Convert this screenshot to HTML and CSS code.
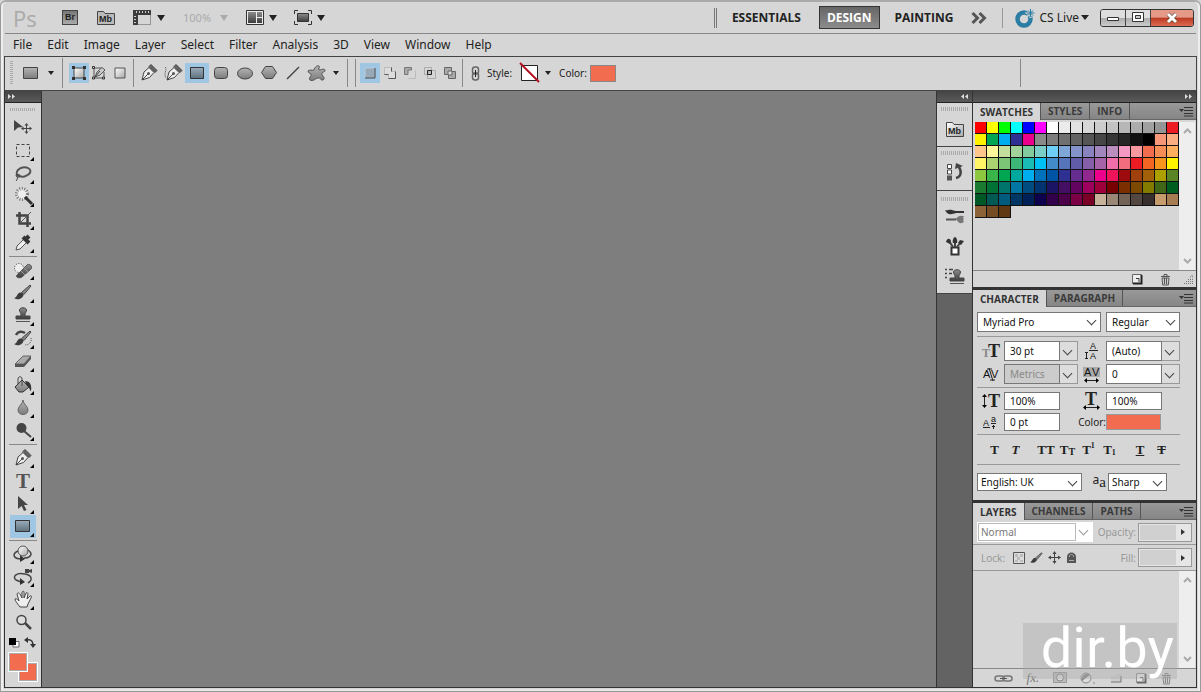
FILE: index.html
```html
<!DOCTYPE html>
<html lang="en">
<head>
<meta charset="utf-8">
<title>Photoshop workspace</title>
<link rel="stylesheet" href="styles.css">
</head>
<body>
<svg class="defs" aria-hidden="true">
  <defs>
    <linearGradient id="gm" x1="0" y1="0" x2="0" y2="1"><stop offset="0" stop-color="#b4b4b4"/><stop offset="1" stop-color="#7c7c7c"/></linearGradient>
    <linearGradient id="gd" x1="0" y1="0" x2="0" y2="1"><stop offset="0" stop-color="#8c8c8c"/><stop offset="1" stop-color="#3c3c3c"/></linearGradient>
    <linearGradient id="gl" x1="0" y1="0" x2="1" y2="1"><stop offset="0" stop-color="#ffffff"/><stop offset="1" stop-color="#a8a8a8"/></linearGradient>
    <linearGradient id="gb" x1="0" y1="0" x2="0" y2="1"><stop offset="0" stop-color="#9aacb9"/><stop offset="1" stop-color="#60717e"/></linearGradient>
    <g id="pen"><path d="M2 16 4 8 9 3.500 14 8.500 9.500 13.500Z" fill="#eeeeee" stroke="#444"/><path d="M2 16 8 10" stroke="#444"/><circle cx="8.500" cy="9.500" r="1.500" fill="#555"/><path d="M9 2.500 11 .5 17 6.500 15 8.500Z" fill="#666" stroke="#444"/></g>
    <g id="menu"><path d="M0 4h5L2.500 7Z" fill="#333"/><path d="M5 2.500h9M5 5.500h9M5 8.500h9M5 11h9" stroke="#333"/></g>
    <g id="brush"><path d="M0 14c3 0 3-5 6-5.500 3.500 0 4.500 3 2 5C6 15.500 3 16 0 14Z" fill="#3c3c3c"/><path d="M7.500 8.500 16 1l1 1-7 8.500Z" fill="#888" stroke="#444"/></g>
    <g id="stamp"><path d="M6 9V7c0-1-1.500-2-1.500-4 0-3 7-3 7 0C11.500 5 10 6 10 7v2h5v3H1V9Z" fill="url(#gd)" stroke="#444"/><path d="M1 14.500h14" stroke="#555"/></g>
    <g id="trash"><path d="M1 3.500h9M4 3V1.500h3V3" fill="none" stroke="#555"/><path d="M2 5h7l-.7 7H2.700Z" fill="#ccc" stroke="#555"/><path d="M4.500 5v6M6.500 5v6" stroke="#555"/></g>
    <g id="page"><path d="M.5.500h9v9h-9Z" fill="#eee" stroke="#666"/><path d="M9.500 1v8.500H1" fill="none" stroke="#222" stroke-width="2"/><path d="M4 4.500h3V8" fill="none" stroke="#333"/></g>
    <g id="up"><path d="M1 5 4.500 1.500 8 5" fill="none" stroke="#aaa" stroke-width="2"/></g>
    <g id="down"><path d="M1 1 4.500 4.500 8 1" fill="none" stroke="#aaa" stroke-width="2"/></g>
  </defs>
</svg>
<div class="window">
  <header class="titlebar">
    <span class="logo">Ps</span>
    <button class="icon-btn bridge" aria-label="Bridge"><span class="br">Br</span></button>
    <button class="icon-btn minib" aria-label="Mini Bridge"><svg width="20" height="16"><path d="M1.500 14.500v-13h6l1.500 2h9.500v11Z" fill="#bbb" stroke="#444"/><text x="3" y="12" class="mbtxt">Mb</text></svg></button>
    <button class="icon-btn drop extras" aria-label="View extras"><svg width="19" height="16"><path d="M0 0h18v5H5v10H0Z" fill="#3c3c3c"/><path d="M3.500 1v2M6.500 1v2M9.500 1v2M12.500 1v2M15.500 1v2M1 6.500h2M1 9.500h2M1 12.500h2" stroke="#ccc"/><path d="M5.500 14.500h12V5" fill="none" stroke="#555" stroke-dasharray="1 1"/></svg><i class="tri"></i></button>
    <button class="icon-btn drop zoomlvl">100%<i class="tri"></i></button>
    <button class="icon-btn drop arrange" aria-label="Arrange documents"><svg width="18" height="16"><path d="M.5.500h17v14H.5Z" fill="#eee" stroke="#333"/><path d="M2 2h8v11H2ZM11 2h5v5h-5ZM11 8h5v5h-5Z" fill="url(#gd)"/></svg><i class="tri"></i></button>
    <button class="icon-btn drop" aria-label="Screen mode"><svg width="18" height="15"><path d="M.5 4V.5H4M14 .5h3.500V4M17.500 11v3.500H14M4 14.500H.5V11" fill="none" stroke="#333"/><path d="M3.500 3.500h11v8h-11Z" fill="url(#gd)" stroke="#333"/></svg><i class="tri"></i></button>
    <div class="spaces">
      <button class="space">ESSENTIALS</button>
      <button class="space on">DESIGN</button>
      <button class="space">PAINTING</button>
      <button class="more" aria-label="More workspaces"><svg width="16" height="12"><path d="M1.500 1 6.500 6 1.500 11M8.500 1 13.500 6 8.500 11" fill="none" stroke="#555" stroke-width="3"/></svg></button>
    </div>
    <button class="cslive"><svg width="20" height="20"><circle cx="9" cy="11" r="6.500" fill="none" stroke="#2b7da3" stroke-width="4.500"/><path d="M15.500 0v10M10.500 5h10M12 1.500l7 7M19 1.500l-7 7" stroke="#d6d6d6" stroke-width="2"/><path d="M15.500 1v8M11.500 5h8M13 2.500l5 5M18 2.500l-5 5" stroke="#2b7da3"/></svg><span>CS Live</span><i class="tri small"></i></button>
    <div class="winbtns">
      <button aria-label="Minimize"><svg width="14" height="8"><path d="M1.500 3.500h11v3h-11Z" fill="#fff" stroke="#333"/></svg></button>
      <button aria-label="Maximize"><svg width="14" height="11"><path d="M1.500.500h11v9h-11Z" fill="#fff" stroke="#333"/><path d="M4.500 3.500h5v3h-5Z" fill="#ccc" stroke="#333"/></svg></button>
      <button class="close" aria-label="Close"><svg width="14" height="12"><path d="M3 2 11 10M11 2 3 10" stroke="#543" stroke-width="4"/><path d="M3 2 11 10M11 2 3 10" stroke="#fff" stroke-width="3"/></svg></button>
    </div>
  </header>
  <nav class="menubar">
    <button>File</button><button>Edit</button><button>Image</button><button>Layer</button><button>Select</button><button>Filter</button><button>Analysis</button><button>3D</button><button>View</button><button>Window</button><button>Help</button>
  </nav>

  <div class="options">
    <i class="vgrip"></i>
    <button class="opt preset" aria-label="Tool preset"><svg width="16" height="13"><path d="M.5.500h14v11H.5Z" fill="url(#gm)" stroke="#444"/></svg><i class="tri small"></i></button>
    <div class="group">
      <button class="opt on" aria-label="Shape layers"><svg width="16" height="16"><path d="M3 3h10v10H3Z" fill="url(#gl)" stroke="#444"/><path d="M1 1h3v3H1ZM12 1h3v3h-3ZM1 12h3v3H1ZM12 12h3v3h-3Z" fill="#333"/></svg></button>
      <button class="opt" aria-label="Paths"><svg width="16" height="16"><path d="M3 3h8M3 3v10h10V7" fill="none" stroke="#555"/><path d="M1.500 1.500h2v2h-2ZM1.500 12h2v2h-2ZM11.500 12h2v2h-2Z" fill="#ddd" stroke="#333"/><path d="M4 12 6 7 11 2.500 14 5 9 10Z" fill="#ccc" stroke="#555"/><path d="M4 12 9 6" stroke="#444"/></svg></button>
      <button class="opt" aria-label="Fill pixels"><svg width="12" height="12"><path d="M1 1h10v10H1Z" fill="url(#gl)" stroke="#555"/></svg></button>
    </div>
    <div class="group shapes">
      <button class="opt" aria-label="Pen"><svg width="18" height="18"><use href="#pen"/></svg></button>
      <button class="opt" aria-label="Freeform pen"><svg width="20" height="18"><use href="#pen" x="2"/><path d="M2 3c3 2-2 6 1 11" fill="none" stroke="#444" stroke-dasharray="1 1"/></svg></button>
      <button class="opt on" aria-label="Rectangle"><svg width="15" height="13"><path d="M.5.500h13v11H.5Z" fill="url(#gb)" stroke="#333"/></svg></button>
      <button class="opt" aria-label="Rounded rectangle"><svg width="15" height="13"><rect x=".5" y=".5" width="13" height="11" rx="3" fill="url(#gm)" stroke="#444"/></svg></button>
      <button class="opt" aria-label="Ellipse"><svg width="17" height="13"><ellipse cx="8" cy="6.500" rx="7.500" ry="5.500" fill="url(#gm)" stroke="#444"/></svg></button>
      <button class="opt" aria-label="Polygon"><svg width="17" height="14"><path d="M4.500.500h7l4 6-4 6h-7l-4-6Z" fill="url(#gm)" stroke="#444"/></svg></button>
      <button class="opt" aria-label="Line"><svg width="14" height="14"><path d="M1 13 13 1" stroke="#444" stroke-width="1.500"/></svg></button>
      <button class="opt" aria-label="Custom shape"><svg width="20" height="17"><path d="M7 5c1-3 3-5 5-4 1 1-1 3 0 4 2 0 5-2 6 0 1 2-4 2-3 4 0 2 4 4 1 6-2 1-3-3-5-2-2 0-5 4-8 2-2-2 2-4 1-6-1-1-3-1-3-3 1-2 4 0 6-1Z" fill="url(#gm)" stroke="#555"/></svg></button>
      <button class="tiny" aria-label="Shape options"><i class="tri small"></i></button>
    </div>
    <div class="group combine">
      <button class="opt on" aria-label="Create new shape layer"><svg width="12" height="12"><path d="M1 1h10v10H1Z" fill="#98aab8" stroke="#bcd"/><path d="M1 11h10V1" fill="none" stroke="#444"/></svg></button>
      <button class="opt" aria-label="Add"><svg width="14" height="14"><path d="M1.500 1.500h7v4h4v7h-7v-4h-4Z" fill="#ddd" stroke="#bbb"/><path d="M1.500 8.500h4M8.500 1.500v4M5.500 12.500h7v-7" fill="none" stroke="#555"/></svg></button>
      <button class="opt" aria-label="Subtract"><svg width="14" height="14"><path d="M1.500 8.500v-7h7V4H5v4.500Z" fill="#aaa" stroke="#777"/><path d="M5.500 12.500h7v-8" fill="none" stroke="#bbb"/></svg></button>
      <button class="opt" aria-label="Intersect"><svg width="14" height="14"><path d="M1.500 1.500h7v7h-7ZM4.500 4.500h8v8h-8Z" fill="none" stroke="#aaa"/><path d="M4.500 4.500h4v4h-4Z" fill="#bbb" stroke="#222"/></svg></button>
      <button class="opt" aria-label="Exclude"><svg width="14" height="14"><path d="M1.500 1.500h7v7h-7ZM5.500 5.500h7v7h-7Z" fill="#aaa" stroke="#666"/><path d="M5 5h4v4H5Z" fill="#ddd" stroke="#666"/></svg></button>
    </div>
    <button class="opt link" aria-label="Link"><svg width="9" height="15"><rect x="1.500" y="1" width="6" height="7" rx="2.500" fill="none" stroke="#666" stroke-width="1.500"/><rect x="1.500" y="7" width="6" height="7" rx="2.500" fill="none" stroke="#666" stroke-width="1.500"/><path d="M4.500 4v7" stroke="#222"/></svg></button>
    <span class="lbl">Style:</span>
    <button class="style-chip" aria-label="Style"><svg width="22" height="22"><path d="M2.500 3.500h16v15h-16Z" fill="#fff" stroke="#222"/><path d="M1 1 20 20" stroke="#b01020" stroke-width="2"/></svg><i class="tri small"></i></button>
    <span class="lbl">Color:</span>
    <button class="color-chip" aria-label="Color"></button>
    <i class="opt-end"></i>
  </div>

  <main class="work">
    <aside class="tools">
      <div class="colhead left"><svg width="8" height="7"><path d="M0 1 3 3.500 0 6ZM4 1 7 3.500 4 6Z" fill="#ddd"/></svg></div>
      <i class="hgrip"></i>
      <div class="toolset">
        <button aria-label="Move"><svg width="20" height="17"><path d="M1 1 10 8 5 8.500 1 12Z" fill="#444"/><path d="M13.500 5v9M9 9.500h9" stroke="#444"/><path d="M11.500 6.500h4l-2-2.500ZM11.500 12.500h4l-2 2.500ZM10.500 7.500v4L8 9.500ZM16.500 7.500v4l2.500-2Z" fill="#444"/></svg></button>
        <button class="fly" aria-label="Marquee"><svg width="16" height="15"><rect x="1.500" y="1.500" width="13" height="12" fill="none" stroke="#444" stroke-dasharray="3 2"/></svg></button>
        <button class="fly" aria-label="Lasso"><svg width="18" height="16"><ellipse cx="9.500" cy="6" rx="7" ry="4.500" transform="rotate(-12 9.500 6)" fill="none" stroke="#555" stroke-width="2"/><path d="M3 8c-3 2 2 5 3 2 1-2-4-2-3 0 1 2 0 4-1 5" fill="none" stroke="#444"/></svg></button>
        <button class="fly" aria-label="Magic wand"><svg width="19" height="19"><circle cx="8" cy="7" r="5.500" fill="#eee" stroke="#777" stroke-width="3" stroke-dasharray="1 1.500"/><path d="M11 10 18 17" stroke="#333" stroke-width="3"/></svg></button>
        <button class="fly" aria-label="Crop"><svg width="17" height="17"><path d="M4.500 1v11.500H16M1 4.500h11.500V16" fill="none" stroke="#444" stroke-width="2.500"/><path d="M5 12 16 1" stroke="#555"/></svg></button>
        <button class="fly" aria-label="Eyedropper"><svg width="17" height="17"><path d="M1 16 2 12 9 5l3 3-7 7Z" fill="#eee" stroke="#555"/><path d="M8 3 14 9M11 5l3-3" stroke="#333" stroke-width="4"/></svg></button>
      </div>
      <div class="toolset">
        <button class="fly" aria-label="Healing brush"><svg width="20" height="18"><circle cx="6" cy="7" r="4.500" fill="#eee" stroke="#333" stroke-dasharray="1 1.500"/><path d="M4 14 14 4c2-2 6 1 4 4L9 16c-3 2-7 0-5-2Z" fill="url(#gd)" stroke="#555"/><path d="M8 10l4 4M11 7l4 4" stroke="#999"/></svg></button>
        <button class="fly" aria-label="Brush"><svg width="18" height="17"><use href="#brush"/></svg></button>
        <button class="fly" aria-label="Clone stamp"><svg width="17" height="17"><use href="#stamp"/></svg></button>
        <button class="fly" aria-label="History brush"><svg width="19" height="17"><use href="#brush"/><path d="M2 5c2-4 6-4 9-2" fill="none" stroke="#444" stroke-width="2.500"/><path d="M17 8c1 4-2 7-6 7" fill="none" stroke="#555" stroke-dasharray="1 1"/></svg></button>
        <button class="fly" aria-label="Eraser"><svg width="20" height="15"><path d="M2 10 10 2h8l-7 8Z" fill="#aaa" stroke="#666"/><path d="M2 10h9l7-8v3l-7 8H2Z" fill="#555"/></svg></button>
        <button class="fly" aria-label="Paint bucket"><svg width="20" height="18"><path d="M2 11 9 4l7 7-6 5H6Z" fill="url(#gm)" stroke="#333"/><path d="M5 8V3c0-3 4-3 4 0v7" fill="none" stroke="#444"/><path d="M12 5c5 0 7 4 6 10-2-1-1-4-4-5Z" fill="#333"/></svg></button>
        <button class="fly" aria-label="Blur"><svg width="14" height="17"><path d="M7 1c0 4-5 6-5 10 0 6 10 6 10 0C12 7 7 5 7 1Z" fill="url(#gm)" stroke="#666"/></svg></button>
        <button class="fly" aria-label="Dodge"><svg width="17" height="17"><circle cx="6.500" cy="6" r="5" fill="#444"/><path d="M9 9 16 15" stroke="#444" stroke-width="2"/></svg></button>
      </div>
      <div class="toolset">
        <button class="fly" aria-label="Pen tool"><svg width="18" height="18"><use href="#pen"/></svg></button>
        <button class="fly type" aria-label="Type">T</button>
        <button class="fly" aria-label="Path selection"><svg width="12" height="17"><path d="M1 1v13l3.500-3L7 16l2.500-1L7 10h4Z" fill="#444"/></svg></button>
        <button class="fly on" aria-label="Rectangle tool"><svg width="16" height="13"><path d="M.5.500h14v11H.5Z" fill="url(#gb)" stroke="#333"/></svg></button>
      </div>
      <div class="toolset last">
        <button class="fly" aria-label="3D rotate"><svg width="20" height="18"><circle cx="10" cy="6" r="5" fill="url(#gl)" stroke="#555"/><path d="M5 6c-7 3-4 8 3 8M15 5c6 4 2 8-4 8" fill="none" stroke="#444" stroke-width="1.500"/><path d="M7 10v7l5-3Z" fill="#333"/></svg></button>
        <button class="fly" aria-label="3D camera"><svg width="20" height="18"><path d="M12 1h4v1l3-1v4l-3-1v1h-4Z" fill="#444"/><path d="M12 6C3 4-1 9 3 12l5 2M12 6c7 1 8 6 3 9" fill="none" stroke="#444" stroke-width="1.500"/><path d="M7 10v7l5-3Z" fill="#333"/></svg></button>
        <button class="fly" aria-label="Hand"><svg width="19" height="19"><path d="M6 17C3 13 1 11 1 9c1-1 2 0 4 2L3 4c1-2 2-1 3 0l2 4V2c1-1 2-1 2 0v6l2-5c1-1 2 0 2 1l-1 5 3-3c1-1 2 0 1 2l-3 6-1 3Z" fill="#eee" stroke="#444"/></svg></button>
        <button aria-label="Zoom"><svg width="17" height="17"><circle cx="6.500" cy="6" r="4.500" fill="#ddd" stroke="#444" stroke-width="1.500"/><path d="M10 9 16 15" stroke="#444" stroke-width="2.500"/></svg></button>
      </div>
      <div class="minis"><svg width="11" height="10"><path d="M4 3.500h6V9H4Z" fill="#fff" stroke="#666"/><path d="M0 0h7v7H0Z" fill="#000"/></svg><svg width="12" height="11"><path d="M3 3c5-1 6 2 6 6" fill="none" stroke="#333" stroke-width="1.500"/><path d="M4 0v6L0 3ZM6 7h6l-3 4Z" fill="#333"/></svg></div>
      <div class="fgbg"><button class="bg" aria-label="Background color"></button><button class="fg" aria-label="Foreground color"></button></div>
    </aside>

    <section class="canvas" aria-label="Canvas"></section>

    <aside class="dock">
      <div class="colhead right"><svg width="8" height="7"><path d="M3 1 0 3.500 3 6ZM7 1 4 3.500 7 6Z" fill="#ddd"/></svg></div>
      <div class="dockgroup"><i class="hgrip"></i><button aria-label="Mini Bridge panel"><svg width="20" height="18"><path d="M1.500 16.500v-14h6l1.500 2h9.500v12Z" fill="url(#gl)" stroke="#444"/><text x="3" y="14" class="mbtxt">Mb</text></svg></button></div>
      <div class="dockgroup"><i class="hgrip"></i><button aria-label="History"><svg width="18" height="18"><path d="M1.500 1.500h4v4h-4ZM1.500 7h4v4h-4Z" fill="#fff" stroke="#444"/><path d="M1 12.500h5v5H1Z" fill="#555"/><path d="M10 15c5-1 6-6 3-11" fill="none" stroke="#444" stroke-width="2.500"/><path d="M9 6 10 0l7 3Z" fill="#444"/></svg></button></div>
      <div class="dockgroup"><i class="hgrip"></i>
        <button aria-label="Brush panel"><svg width="20" height="17"><path d="M0 2c2 1 4-1 7 0 1 0 2 1 4 1h8v2h-8c-1 0-2 1-4 1-3 1-5 0-7-4Z" fill="#333"/><path d="M1 11.500h10" stroke="#555" stroke-width="2"/><path d="M10 11c3-1 3-4 7-3l2 0-1 2 1 1-1 1 1 2-2 1c-4 1-4-3-7-4Z" fill="#777"/></svg></button>
        <button aria-label="Brush presets"><svg width="18" height="19"><path d="M5.500 10.500h7v7h-7Z" fill="#fff" stroke="#333" stroke-width="2"/><path d="M7 10 3 4M9 10V3M11 10l4-5" stroke="#444" stroke-width="2"/><path d="M0 5c1-4 4-4 5-1L4 7ZM7 6c-1-3 1-6 2-6s3 3 2 6ZM12 6l2-3 4 1-3 4Z" fill="#333"/></svg></button>
        <button aria-label="Clone source"><svg width="20" height="18"><path d="M0 2.500h2M4 2.500h4M0 6.500h2M4 6.500h3M0 10.500h2" stroke="#444" stroke-width="1.500"/><g transform="translate(4 2)"><use href="#stamp"/></g></svg></button>
      </div>
    </aside>

    <aside class="panels">
      <div class="colhead end"><svg width="8" height="7"><path d="M0 1 3 3.500 0 6ZM4 1 7 3.500 4 6Z" fill="#ddd"/></svg></div>
      <section class="panel">
        <div class="tabs"><button class="on">SWATCHES</button><button>STYLES</button><button>INFO</button><svg class="pmenu" width="14" height="12"><use href="#menu"/></svg></div>
        <div class="swbody"><div class="swatches" id="swatches"></div><div class="scroll"><svg width="9" height="6"><use href="#up"/></svg><svg width="9" height="6"><use href="#down"/></svg></div></div>
        <div class="swfoot"><svg width="11" height="11"><use href="#page"/></svg><svg width="11" height="13"><use href="#trash"/></svg><svg width="11" height="11"><path d="M9 1v1M7 3h3M5 5.500h6M3 7.500h8M1 9.500h10" stroke="#777" stroke-dasharray="1 1" /></svg></div>
      </section>
      <section class="panel">
        <div class="tabs"><button class="on">CHARACTER</button><button>PARAGRAPH</button><svg class="pmenu" width="14" height="12"><use href="#menu"/></svg></div>
        <div class="char">
          <div class="crow fonts"><div class="sel"><select aria-label="Font family"><option>Myriad Pro</option></select></div><div class="sel"><select aria-label="Font style"><option>Regular</option></select></div></div>
          <div class="cgrid">
            <svg width="18" height="16"><text x="0" y="14" class="s12">T</text><text x="6" y="14" class="s17">T</text></svg>
            <div class="combo"><input aria-label="Font size" value="30 pt"><button aria-label="Font size list"></button></div>
            <svg width="16" height="20"><text x="6" y="8" class="a9">A</text><text x="6" y="18" class="a9">A</text><path d="M2.500 11v7M1 11.500h3M1 17.500h3M5 9.500h9" stroke="#222"/></svg>
            <div class="combo"><input aria-label="Leading" value="(Auto)"><button aria-label="Leading list"></button></div>
            <svg width="18" height="17"><text x="1" y="12" class="a10">A</text><text x="9" y="12" class="a10">V</text><path d="M7 2 11 15M5 3h5M8 14h5" stroke="#222"/></svg>
            <div class="combo off"><input aria-label="Kerning" value="Metrics" disabled><button aria-label="Kerning list"></button></div>
            <svg width="18" height="17"><path d="M0 1h17v10H0Z" fill="#aaa"/><text x="1" y="10" class="a10">A</text><text x="9" y="10" class="a10">V</text><path d="M2 14.500h13" stroke="#222"/><path d="M1 14.500 4 12v5ZM16 14.500 13 12v5Z"/></svg>
            <div class="combo"><input aria-label="Tracking" value="0"><button aria-label="Tracking list"></button></div>
          </div>
          <div class="cgrid short">
            <svg width="18" height="18"><path d="M2.500 3v11" stroke="#222"/><path d="M0 5h5L2.500 2ZM0 13h5l-2.500 3Z"/><text x="6" y="15" class="s17">T</text></svg>
            <input aria-label="Vertical scale" value="100%">
            <svg width="18" height="18"><text x="2" y="13" class="s17">T</text><path d="M2 15.500h13" stroke="#222"/><path d="M0 15.500 3 13v5ZM17 15.500 14 13v5Z"/></svg>
            <input aria-label="Horizontal scale" value="100%">
            <svg width="17" height="16"><text x="1" y="12" class="a9">A</text><text x="9" y="8" class="a9">a</text><path d="M1 13.500h7M9 9.500h5M11.500 11v4M10 12.500h3" stroke="#222"/></svg>
            <input aria-label="Baseline shift" value="0 pt">
            <span class="clbl">Color:</span>
            <button class="chip" aria-label="Text color"></button>
          </div>
          <div class="styles"><button aria-label="Bold"><b>T</b></button><button aria-label="Italic"><em>T</em></button><button class="wide" aria-label="All caps">TT</button><button aria-label="Small caps">T<small>T</small></button><button aria-label="Superscript">T<sup>1</sup></button><button aria-label="Subscript">T<sub>1</sub></button><button class="wide" aria-label="Underline"><u>T</u></button><button aria-label="Strikethrough"><s>T</s></button></div>
          <div class="crow lang"><div class="sel"><select aria-label="Language"><option>English: UK</option></select></div><span class="aa"><span>a</span>a</span><div class="sel"><select aria-label="Anti-aliasing"><option>Sharp</option></select></div></div>
        </div>
      </section>
      <section class="panel layers">
        <div class="tabs"><button class="on">LAYERS</button><button>CHANNELS</button><button>PATHS</button><svg class="pmenu" width="14" height="12"><use href="#menu"/></svg></div>
        <div class="lrow"><div class="sel blend"><select aria-label="Blend mode" disabled><option>Normal</option></select></div><label for="opacity">Opacity:</label><div class="spin"><input id="opacity" disabled><button aria-label="Opacity slider"></button></div></div>
        <div class="lrow"><span class="lock">Lock:</span>
          <svg width="12" height="12"><path d="M.5.500h11v11H.5Z" fill="#ddd" stroke="#555"/><path d="M2 2h3v3H2ZM7 2h3v3H7ZM4 5h3v3H4ZM2 8h3v2H2ZM7 8h3v2H7Z" fill="#bbb"/></svg>
          <svg width="13" height="12" viewBox="0 0 18 17"><use href="#brush"/></svg>
          <svg width="13" height="13"><path d="M6.500 1v11M1 6.500h11" stroke="#444"/><path d="M4.500 3h4l-2-3ZM4.500 10h4l-2 3ZM3 4.500v4l-3-2ZM10 4.500v4l3-2Z" fill="#444"/></svg>
          <svg width="11" height="12"><path d="M1 5c0-6 9-6 9 0v6H1Z" fill="#555"/><path d="M3.500 5V4c0-2 4-2 4 0v1M3 8.500h5" fill="none" stroke="#aaa"/></svg>
          <label for="fill">Fill:</label><div class="spin"><input id="fill" disabled><button aria-label="Fill slider"></button></div></div>
        <div class="lbody"><div class="list"></div><div class="scroll"><svg width="9" height="6"><use href="#up"/></svg><svg width="9" height="6"><use href="#down"/></svg></div></div>
        <div class="lfoot">
          <svg width="19" height="9"><rect x="1" y="2" width="9" height="5" rx="2.500" fill="none" stroke="#777" stroke-width="1.500"/><rect x="9" y="2" width="9" height="5" rx="2.500" fill="none" stroke="#777" stroke-width="1.500"/><path d="M6 4.500h7" stroke="#555"/></svg>
          <em class="fx">fx.</em>
          <svg width="14" height="12"><path d="M.5.500h13v10H.5Z" fill="#bbb" stroke="#999"/><circle cx="7" cy="5.500" r="3.500" fill="#ddd" stroke="#888"/></svg>
          <svg width="16" height="12"><circle cx="6" cy="6" r="5" fill="#ddd" stroke="#888"/><path d="M2 9C1 3 6 0 10 3Z" fill="#888"/><path d="M13 11h2" stroke="#888"/></svg>
          <svg width="13" height="10"><path d="M1 9V3h6V1h4v8Z" fill="#ccc"/><path d="M1 9h10V3" fill="none" stroke="#777"/></svg>
          <svg class="faded" width="11" height="11"><use href="#page"/></svg>
          <svg class="faded" width="11" height="13"><use href="#trash"/></svg>
        </div>
        <div class="mark">dir.by</div>
      </section>
    </aside>
  </main>
</div>
<script src="script.js"></script>
</body>
</html>
```
FILE: styles.css
```css
* { box-sizing: border-box; }
body { margin: 0; background: #d6d6d6; font-family: "Noto Sans", "Open Sans", sans-serif; font-size: 10px; color: #222; }
button { border: 0; background: none; padding: 0; margin: 0; font: inherit; color: inherit; display: flex; align-items: center; justify-content: center; }
input, select { font: inherit; color: #111; margin: 0; border: 1px solid #777; background: #fff; border-radius: 0; min-width: 0; }
svg { display: block; flex: none; overflow: visible; }
.defs { position: absolute; width: 0; height: 0; }
.window { min-height: 100vh; display: flex; flex-direction: column; background: #d6d6d6; border: 1px solid #999; border-top: 2px solid #aaa; border-radius: 6px 6px 0 0; padding: 0 3px 3px; box-shadow: inset 2px 0 #eee, inset -2px 0 #eee, inset 0 -2px #e6e6e6; }

.tri { border: 4px solid transparent; border-top: 6px solid #222; border-bottom: 0; flex: none; }
.tri.small { border-width: 4px 3px 0; }

.titlebar { display: flex; align-items: center; height: 32px; margin: 0 1px; border-bottom: 1px solid #888; padding: 0 2px 0 8px; }
.logo { font: 22px/30px "Open Sans", sans-serif; color: #aaa; width: 49px; }
.br { width: 16px; height: 15px; border: 1px solid #444; background: linear-gradient(#777, #aaa); font: bold 9px/13px "Liberation Sans", sans-serif; }
.mbtxt { font: bold 9px "Liberation Sans", sans-serif; fill: #222; }
.bridge { width: 16px; }
.minib { margin: 0 17px 0 18px; }
.drop { gap: 5px; }
.extras { margin-right: 18px; }
.zoomlvl { color: #aaa; font-size: 11px; gap: 9px; margin-right: 18px; }
.zoomlvl .tri { border-top-color: #aaa; }
.arrange { margin-right: 17px; }
.spaces { display: flex; align-items: center; margin-left: auto; border-left: 3px double #777; height: 20px; font: bold 12px "Open Sans", sans-serif; padding-left: 3px; }
.space { height: 23px; padding: 0 11px; border: 1px solid transparent; margin-right: 4px; }
.space.on { background: linear-gradient(#666, #8c8c8c); border-color: #333; color: #fff; padding: 0 7px; margin: 0 3px 0 2px; }
.more { margin: 0 15px 0 2px; }
.cslive { height: 20px; border-left: 1px solid #999; padding-left: 12px; font-size: 12px; gap: 4px; margin-right: 11px; }
.cslive .tri { border-width: 5px 4px 0; margin-left: -2px; }
.winbtns { display: flex; border: 1px solid #333; border-radius: 3px; overflow: hidden; height: 18px; }
.winbtns button { width: 25px; border-right: 1px solid #444; background: linear-gradient(#ddd 50%, #aaa 50%, #ccc); }
.winbtns .close { width: 42px; border: 0; background: linear-gradient(#e59a88 45%, #bb3a22 50%, #dd6a50); }

.menubar { display: flex; height: 22px; align-items: center; gap: 15px; padding: 0 0 2px 9px; font-size: 12px; }

.options { display: flex; align-items: center; height: 35px; border: solid #444; border-width: 1px; padding: 0 0 1px 5px; }
.vgrip { width: 3px; height: 24px; background: repeating-linear-gradient(#aaa 0 1px, transparent 1px 2px); }
.opt { width: 20px; height: 20px; }
.opt.on { background: #9fc6e2; }
.preset { width: 50px; height: 30px; gap: 9px; border-right: 1px solid #888; }
.preset svg { margin-left: 2px; }
.group { display: flex; align-items: center; height: 28px; border-right: 1px solid #888; padding: 0 3px 0 6px; }
.group .opt:last-child { margin-left: 1px; }
.shapes { padding: 0 4px 0 3px; }
.shapes .opt { width: 24px; margin: 0; }
.tiny { width: 14px; height: 22px; }
.combine { margin-left: 7px; border-left: 1px solid #888; padding: 0 2px 0 4px; }
.combine .opt:last-child { margin-left: 0; }
.link { width: 24px; }
.lbl { margin-right: 7px; }
.style-chip { gap: 4px; margin-right: 8px; }
.color-chip { width: 26px; height: 17px; background: #f26c50; border: 1px solid #888; margin-left: -4px; }
.opt-end { border-left: 1px solid #888; height: 28px; margin: 0 175px 0 auto; }

.work { flex: 1; display: flex; background: #7e7e7e; border: solid #333; border-width: 0 1px 1px; }
.colhead { height: 12px; background: linear-gradient(#444, #5a5a5a); border-bottom: 1px solid #222; display: flex; align-items: center; padding: 0 3px; }
.colhead.right { justify-content: flex-end; }
.colhead.end { justify-content: flex-end; }
.hgrip { display: block; height: 4px; margin: 4px 5px 5px; background: repeating-linear-gradient(90deg, #aaa 0 1px, transparent 1px 2px); border-top: 1px solid #d6d6d6; }
.tools { width: 37px; background: #d6d6d6; border-right: 1px solid #333; display: flex; flex-direction: column; }
.toolset { display: flex; flex-direction: column; padding: 0 5px; }
.toolset + .toolset { margin-top: 4px; position: relative; }
.toolset + .toolset::before { content: ""; position: absolute; left: 4px; right: 4px; top: -2px; border-top: 1px solid #888; }
.toolset button { height: 23px; position: relative; }
.toolset button.on { background: #9fc6e2; }
.fly::after { content: ""; position: absolute; right: 2px; bottom: 1px; border-left: 4px solid transparent; border-bottom: 4px solid #000; }
.type { font: bold 21px/22px "Liberation Serif", serif; color: #555; }
.minis { display: flex; justify-content: space-between; align-items: center; height: 17px; padding: 0 5px 0 4px; }
.fgbg { position: relative; height: 33px; margin: 1px 3px 0; }
.fgbg button { position: absolute; width: 20px; height: 20px; background: #f26c50; border: 1px solid #fff; outline: 1px solid #aaa; outline-offset: -2px; }
.fg { left: 0; top: 0; }
.bg { left: 10px; top: 10px; }
.canvas { flex: 1; }
.dock { width: 37px; background: #636363; border: solid #333; border-width: 0 1px; }
.dockgroup { background: #d6d6d6; border-bottom: 1px solid #444; padding-bottom: 2px; }
.dockgroup .hgrip { margin: 0 4px; border-top-width: 4px; height: 8px; }
.dockgroup button { width: 100%; height: 30px; }
.dockgroup:nth-child(2) { height: 44px; }
.dockgroup:nth-child(2) button { height: 36px; }
.dockgroup:nth-child(3) { height: 44px; }
.dockgroup:nth-child(3) button { height: 34px; }
.dockgroup:nth-child(4) { padding: 2px 0 2px; }

.panels { width: 223px; background: #d6d6d6; display: flex; flex-direction: column; }
.panel + .panel { border-top: 3px solid #333; }
.tabs { display: flex; height: 17px; background: linear-gradient(#999, #858585); border-bottom: 1px solid #666; font: bold 10px "Open Sans", sans-serif; color: #3a3a3a; }
.tabs button { padding: 0 7px; border-right: 1px solid #555; }
.tabs .on { background: #d6d6d6; height: 17px; color: #333; }
.pmenu { margin: 2px 3px 0 auto; }
.swbody { display: flex; justify-content: space-between; height: 151px; padding: 2px 1px 0 2px; border-bottom: 1px solid #888; }
.swatches { display: grid; grid-template-columns: repeat(17, 12px); grid-auto-rows: 12px; align-content: start; }
.swatches i { border: solid #111; border-width: 0 1px 1px 0; }
.scroll { width: 16px; background: #eee; display: flex; flex-direction: column; align-items: center; justify-content: space-between; padding: 6px 0; }
.swfoot { display: flex; justify-content: flex-end; align-items: center; height: 16px; gap: 17px; padding-right: 2px; }
.swfoot svg:last-child { margin-left: -5px; }

.char { padding: 5px 16px 9px 4px; }
.crow { display: flex; align-items: center; }
.sel { position: relative; height: 20px; }
.sel select { appearance: none; width: 100%; height: 100%; padding: 0 5px; display: block; opacity: 1; }
.sel::after, .combo button::after { content: ""; position: absolute; right: 6px; top: 5px; width: 6px; height: 6px; border: solid #444; border-width: 0 1px 1px 0; rotate: 45deg; }
.fonts { gap: 5px; padding-bottom: 4px; }
.fonts .sel:first-child { flex: 1; }
.fonts .sel:last-child { width: 74px; }
.cgrid { display: grid; grid-template-columns: 27px 74px 28px 74px; row-gap: 3px; border-top: 1px solid #999; padding: 4px 0 3px; align-items: center; }
.cgrid > svg { justify-self: center; }
.s12 { font: bold 12px "Liberation Serif", serif; fill: #888; }
.s17 { font: bold 18px "Liberation Serif", serif; fill: #222; }
.a9 { font: 9px "Liberation Sans", sans-serif; fill: #111; }
.a10 { font: 11px "Liberation Sans", sans-serif; fill: #111; }
.combo { display: flex; height: 20px; }
.combo input { width: 56px; padding: 0 5px; }
.combo button { position: relative; flex: 1; border: 1px solid #999; border-left: 0; background: #ddd; }
.combo.off input { background: #ccc; color: #888; }
.short input { width: 56px; height: 18px; padding: 0 5px; }
.clbl { justify-self: end; }
.chip { width: 55px; height: 16px; background: #f26c50; border: 1px solid #999; justify-self: start; }
.styles { display: flex; align-items: center; border: solid #999; border-width: 1px 0; height: 31px; padding-left: 7px; font: bold 13px "Liberation Serif", serif; }
.styles button { width: 21px; height: 22px; }
.styles .wide { width: 22px; margin-left: 9px; }
.styles small { font-size: 10px; padding-top: 3px; }
.styles sup, .styles sub { font-size: 8px; line-height: 8px; }
.styles sup { padding-bottom: 7px; }
.styles sub { padding-top: 7px; }
.lang { padding-top: 8px; }
.lang .sel { height: 18px; width: 105px; }
.lang .sel select { padding: 0 3px; }
.lang .sel:last-child { width: 59px; }
.sel::after { pointer-events: none; }
.aa { width: 26px; text-align: right; font: 15px/18px "Liberation Serif", serif; padding-right: 2px; }
.aa span { font: 12px/10px "Noto Sans", sans-serif; vertical-align: 3px; }

.layers { flex: 1; display: flex; flex-direction: column; position: relative; }
.lrow { display: flex; align-items: center; height: 25px; padding: 0 4px; border-bottom: 1px solid #999; color: #999; flex: none; }
.lrow + .lrow { height: 26px; }
.lrow label { margin-left: auto; padding-right: 2px; }
.blend { width: 116px; background: #fff; padding: 1px; }
.blend select { width: 98px; border-color: #bbb; color: #777; padding: 0 2px; }
.blend::after { border-color: #999; }
.spin { display: flex; height: 19px; width: 54px; border: 1px solid #999; background: #e6e6e6; padding: 1px; }
.spin input { width: 36px; border: 0; background: #d0d0d0; }
.spin button { flex: 1; }
.spin button::after { content: ""; border: 3px solid transparent; border-left: 4px solid #333; border-right: 0; }
.lock { width: 36px; padding-left: 4px; }
.lrow > svg { margin-right: 5px; }
.lbody { flex: 1; display: flex; border-bottom: 1px solid #888; padding-right: 1px; }
.list { flex: 1; }
.lfoot { display: flex; height: 18px; align-items: center; justify-content: space-between; padding: 0 24px 0 21px; flex: none; }
.fx { font: italic 13px/14px "Liberation Serif", serif; color: #777; }
.faded { opacity: 0.6; }
.mark { position: absolute; right: 19px; bottom: 8px; width: 154px; height: 56px; padding-right: 3px; background: rgba(170, 170, 170, 0.4); color: #fff; font: 56px/50px Roboto, sans-serif; text-align: right; }
```
FILE: script.js
```js
const rows = [
  "ff0000 ffff00 00ff00 00ffff 0000ff ff00ff ffffff ebebeb e1e1e1 d7d7d7 cccccc c2c2c2 b7b7b7 acacac a0a0a0 959595 ed1c24",
  "fff200 00a651 00aeef 2e3192 ec008c 8a8a8a 7d7d7d 707070 626262 555555 464646 363636 262626 111111 000000 f7977a f9ad81",
  "fdc68a fff79a c4df9b a2d39c 82ca9d 7bcdc8 6ecff6 7ea7d8 8493ca 8882be a187be bc8dbf f49ac2 f6989d f26c4f f68e55 fbaf5c",
  "fff467 acd372 7cc576 3bb878 1abbb4 00bff3 438cca 5574b9 605ca8 855fa8 a763a8 f06ea9 f26d7d ed1c24 f26522 f7941d fff200",
  "8dc73f 39b54a 00a651 00a99d 00aeef 0072bc 0054a6 2e3192 662d91 92278f ec008c ed145b 9e0b0f a0410d a36209 aba000 598527",
  "1a7b30 007236 00746b 0076a3 004b80 003471 1b1464 440e62 630460 9e005d 9e0039 790000 7b2e00 7d4900 827b00 406618 005e20",
  "005826 005952 005b7f 003663 002157 0d004c 32004b 4b0049 7b0046 7a0026 c7b299 998675 736357 534741 362f2d c69c6d a67c52",
  "8c6239 754c24 603913"
];
const grid = document.getElementById("swatches");
for (const hex of rows.join(" ").split(" ")) {
  const cell = document.createElement("i");
  cell.style.backgroundColor = "#" + hex;
  grid.append(cell);
}
```
